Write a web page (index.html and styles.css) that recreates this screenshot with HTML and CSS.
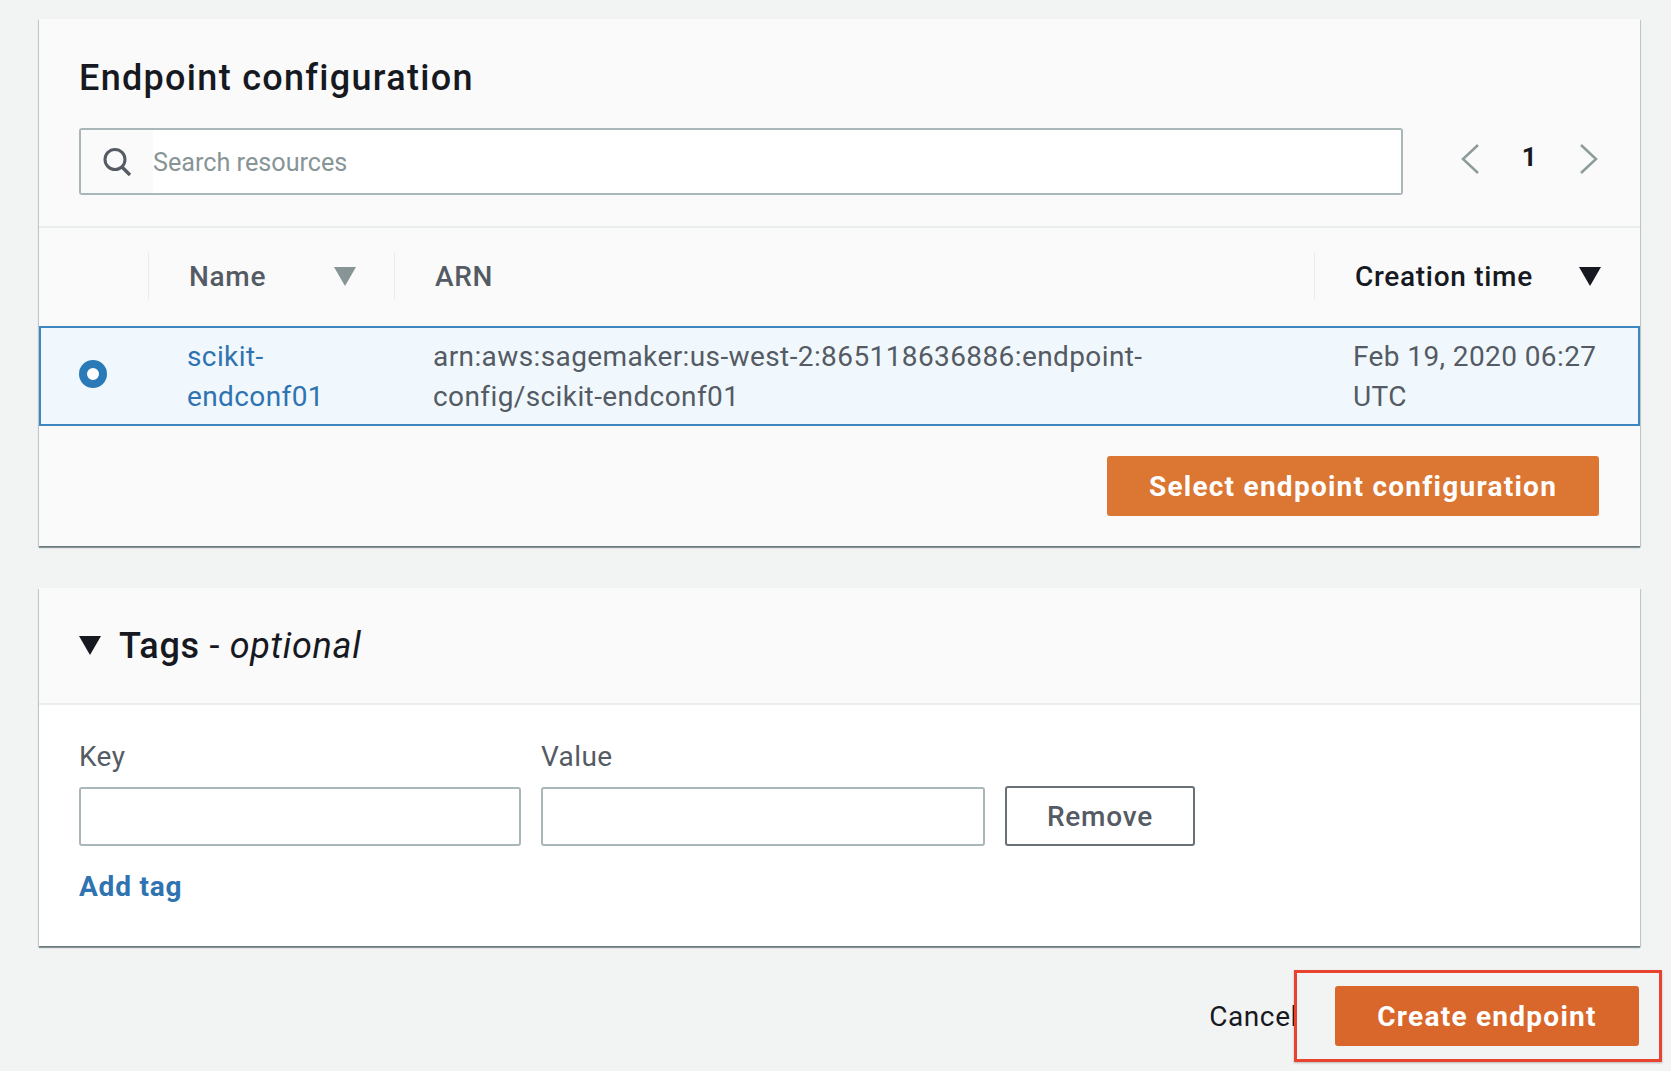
FILE: index.html
```html
<!DOCTYPE html>
<html lang="en">
<head>
    <meta charset="UTF-8">
    <title>Create endpoint</title>
    <link rel="stylesheet" href="styles.css">
</head>
<body>
    <!-- Endpoint configuration -->
    <section class="card">
        <div class="card-head">
            <h2>Endpoint configuration</h2>
            <div class="search-row">
                <div class="search">
                    <div class="search-icon">
                        <svg width="32" height="32" viewBox="0 0 32 32"><circle cx="14" cy="13.5" r="10" fill="none" stroke="#545b64" stroke-width="3"/><path d="M21 21l8 8" stroke="#545b64" stroke-width="3.4" fill="none"/></svg>
                    </div>
                    <input type="text" placeholder="Search resources">
                </div>
                <div class="pager">
                    <svg width="20" height="32" viewBox="0 0 20 32"><path d="M18 2L3 16l15 14" fill="none" stroke="#8d9b9b" stroke-width="2.5"/></svg>
                    <span class="page-num">1</span>
                    <svg width="20" height="32" viewBox="0 0 20 32"><path d="M2 2l15 14L2 30" fill="none" stroke="#8d9b9b" stroke-width="2.5"/></svg>
                </div>
            </div>
        </div>

        <div class="table-head">
            <div class="th th-select"></div>
            <div class="th th-name"><span>Name</span><i class="caret caret-grey"></i></div>
            <div class="th th-arn"><span>ARN</span></div>
            <div class="th th-time"><span>Creation time</span><i class="caret"></i></div>
        </div>
        <div class="table-row">
            <div class="td td-select"><span class="radio"></span></div>
            <div class="td td-name"><a href="#">scikit-<br>endconf01</a></div>
            <div class="td td-arn">arn:aws:sagemaker:us-west-2:865118636886:endpoint-<br>config/scikit-endconf01</div>
            <div class="td td-time">Feb 19, 2020 06:27<br>UTC</div>
        </div>

        <div class="card-actions">
            <button class="btn-primary btn-select">Select endpoint configuration</button>
        </div>
    </section>

    <!-- Tags -->
    <section class="card tags-card">
        <div class="tags-head">
            <i class="caret"></i>
            <h2 class="tags-title">Tags <span class="optional">- <em>optional</em></span></h2>
        </div>
        <div class="tags-body">
            <div class="tag-fields">
                <div class="field field-key">
                    <label for="key">Key</label>
                    <input type="text" id="key">
                </div>
                <div class="field field-value">
                    <label for="value">Value</label>
                    <input type="text" id="value">
                </div>
                <button class="btn-normal">Remove</button>
            </div>
            <a href="#" class="add-tag">Add tag</a>
        </div>
    </section>

    <!-- Footer actions -->
    <div class="page-actions">
        <a href="#" class="cancel">Cancel</a>
        <div class="highlight">
            <button class="btn-primary btn-create">Create endpoint</button>
        </div>
    </div>
</body>
</html>
```

FILE: styles.css
```css
/* General Styles */
* {
    box-sizing: border-box;
}
body {
    margin: 0;
    padding: 19px 0 0 39px;
    width: 1671px;
    height: 1071px;
    overflow: hidden;
    background-color: #f2f3f3;
    color: #545b64;
    font-family: Roboto, "Noto Sans", sans-serif;
    font-size: 28px;
    letter-spacing: 0.4px;
}
h2 {
    margin: 0;
    color: #16191f;
    font-size: 36px;
    font-weight: 500;
    letter-spacing: 1.3px;
}
a {
    color: #2f73b0;
    text-decoration: none;
}
input {
    display: block;
    font-family: inherit;
    font-size: 25.2px;
    letter-spacing: 0;
    background: #fff;
}
button {
    font-family: inherit;
    cursor: pointer;
}

/* Cards */
.card {
    width: 1601px;
    height: 527px;
    background: #fafafa;
    box-shadow: 0 2px 1px 0 rgba(0, 28, 36, 0.4), 1px 1px 1px 0 rgba(0, 28, 36, 0.15), -1px 1px 1px 0 rgba(0, 28, 36, 0.15);
}
.card-head {
    height: 209px;
    padding: 38px 0 0 40px;
    border-bottom: 2px solid #eaeded;
}
.search-row {
    display: flex;
    align-items: flex-start;
    margin-top: 29px;
}
.search {
    display: flex;
    width: 1324px;
    height: 67px;
    border: 2px solid #aab7b8;
    border-radius: 3px;
    background: #fff;
}
.search-icon {
    display: flex;
    align-items: center;
    justify-content: center;
    width: 72px;
    background: #fafafa;
}
.search input {
    flex: 1;
    border: none;
    padding: 2px 0 0;
    outline: none;
}
.search input::placeholder {
    color: #879596;
    opacity: 1;
}
.pager {
    display: flex;
    align-items: flex-start;
    margin: 16px 0 0 57px;
}
.pager svg {
    margin-top: -1px;
}
.page-num {
    width: 99px;
    text-align: center;
    color: #16191f;
    font-size: 26px;
    font-weight: 700;
    line-height: 26px;
}

/* Table */
.table-head {
    display: grid;
    grid-template-columns: 109px 246px 920px 326px;
    height: 98px;
    padding-top: 24px;
}
.th {
    display: flex;
    align-items: center;
    height: 48px;
    padding-left: 40px;
    border-left: 1px solid #eaeded;
    font-weight: 500;
    letter-spacing: 0.7px;
}
.th-select {
    border-left: none;
}
.th-name {
    justify-content: space-between;
    padding-right: 38px;
}
.th-time {
    justify-content: space-between;
    padding-right: 39px;
    color: #16191f;
}
.caret {
    width: 0;
    height: 0;
    border-left: 11px solid transparent;
    border-right: 11px solid transparent;
    border-top: 19px solid #16191f;
}
.caret-grey {
    border-top-color: #879596;
}
.table-row {
    display: grid;
    grid-template-columns: 107px 246px 920px 324px;
    align-items: center;
    height: 100px;
    padding-top: 2px;
    background: #f1f8fd;
    border: 2px solid #3f87c0;
}
.td {
    padding-left: 39px;
    line-height: 40px;
}
.td-select {
    display: flex;
    padding-left: 38px;
    margin-top: -6px;
}
.radio {
    width: 28px;
    height: 28px;
    border: 8px solid #2b7ab8;
    border-radius: 50%;
    background: #fff;
}
.card-actions {
    display: flex;
    justify-content: flex-end;
    padding: 30px 41px 0 0;
}

/* Buttons */
.btn-primary {
    height: 60px;
    border: none;
    border-radius: 3px;
    color: #fff;
    font-size: 28px;
    font-weight: 700;
    letter-spacing: 1.25px;
}
.btn-select {
    width: 492px;
    background-color: #dc7633;
}
.btn-create {
    width: 304px;
    background-color: #d9672b;
}
.btn-normal {
    width: 190px;
    height: 60px;
    border: 2px solid #687078;
    border-radius: 3px;
    background: #fff;
    color: #545b64;
    font-size: 28px;
    font-weight: 500;
    letter-spacing: 0.8px;
}

/* Tags */
.tags-card {
    height: 358px;
    margin-top: 42px;
    background: #fff;
}
.tags-head {
    display: flex;
    align-items: center;
    gap: 18px;
    height: 117px;
    padding-left: 40px;
    background: #fafafa;
    border-bottom: 2px solid #eaeded;
}
.tags-title {
    letter-spacing: 0.7px;
}
.optional {
    font-weight: 400;
}
.tags-body {
    padding: 33px 0 0 40px;
}
.tag-fields {
    display: flex;
    align-items: flex-end;
}
.field label {
    display: block;
    line-height: 38px;
    margin-bottom: 11px;
}
.field input {
    width: 100%;
    height: 59px;
    border: 2px solid #aab7b8;
    border-radius: 3px;
}
.field-key {
    width: 442px;
    margin-right: 20px;
}
.field-value {
    width: 444px;
    margin-right: 20px;
}
.add-tag {
    display: inline-block;
    margin-top: 21px;
    font-weight: 700;
    line-height: 40px;
    letter-spacing: 0.8px;
}

/* Footer actions */
.page-actions {
    display: flex;
    align-items: center;
    justify-content: flex-end;
    width: 1623px;
    margin-top: 24px;
}
.cancel {
    color: #16191f;
    font-weight: 400;
    letter-spacing: 0.6px;
    margin-right: -4px;
}
.highlight {
    position: relative;
    width: 368px;
    height: 92px;
    padding: 13px 0 0 38px;
    border: 3px solid #e8432e;
    background: #f2f3f3;
    box-shadow: 0 1px 2px rgba(0, 0, 0, 0.25);
}
```
